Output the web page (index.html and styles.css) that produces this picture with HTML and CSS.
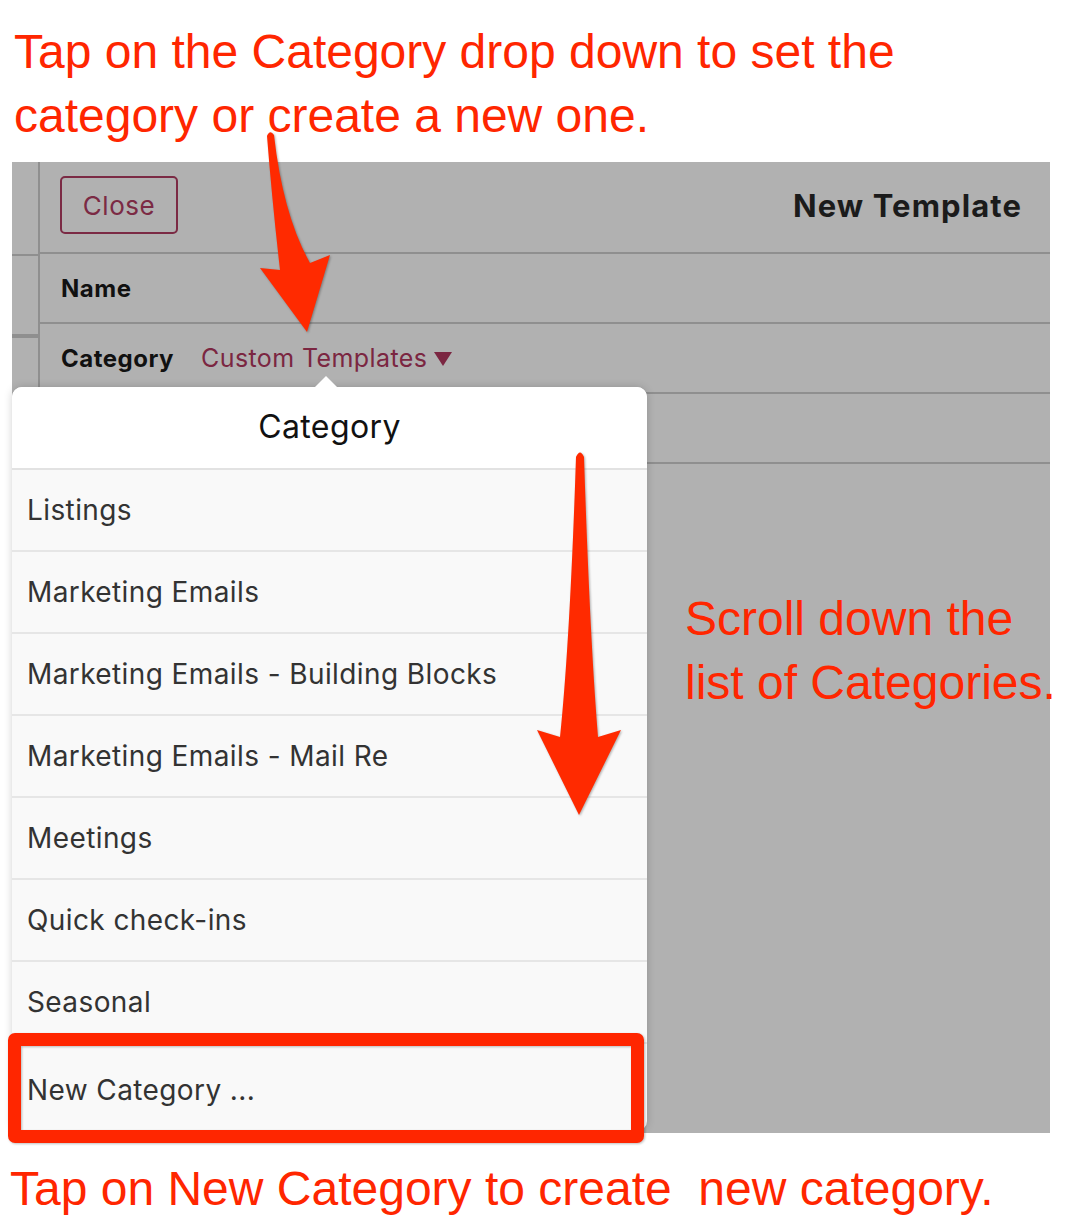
FILE: index.html
```html
<!DOCTYPE html>
<html>
<head>
<meta charset="utf-8">
<title>New Template - Category</title>
<link rel="stylesheet" href="styles.css">
</head>
<body>
<div class="page">
  <p class="note note-top">Tap on the Category drop down to set the<br>category or create a new one.</p>
  <div class="panel">
    <div class="strip">
      <div class="strip-cell s1"></div>
      <div class="strip-cell s2"></div>
      <div class="strip-cell s3"></div>
    </div>
    <div class="main">
      <div class="header">
        <button class="close" type="button">Close</button>
        <h1 class="title">New Template</h1>
      </div>
      <div class="row"><span class="label">Name</span></div>
      <div class="row"><span class="label">Category</span><span class="picker">Custom Templates<span class="tri"></span></span></div>
      <div class="row"></div>
      <p class="note note-scroll">Scroll down the<br>list of Categories.</p>
    </div>
    <div class="popover">
      <div class="pop-head">Category</div>
      <ul class="pop-list">
        <li class="pop-item">Listings</li>
        <li class="pop-item">Marketing Emails</li>
        <li class="pop-item">Marketing Emails - Building Blocks</li>
        <li class="pop-item">Marketing Emails - Mail Re</li>
        <li class="pop-item">Meetings</li>
        <li class="pop-item">Quick check-ins</li>
        <li class="pop-item">Seasonal</li>
        <li class="pop-item pop-last">New Category ...</li>
      </ul>
    </div>
  </div>
  <p class="note note-bottom">Tap on New Category to create&nbsp; new category.</p>
  <div class="highlight"></div>
  <svg class="arrows" width="1076" height="1230" viewBox="0 0 1076 1230" xmlns="http://www.w3.org/2000/svg">
    <path class="arrow" d="M267,136 Q270,129 274,135 Q283,215 310,263 L330,255 L307,332 L260,268 L280,270 Q272,200 267,136 Z"/>
    <path class="arrow" d="M576,457 Q580,448 584,457 Q590,640 598,737 L621,730 L579,815 L537,730 L560,737 Q570,640 576,457 Z"/>
  </svg>
</div>
</body>
</html>
```
FILE: styles.css
```css
html, body {
  margin: 0;
  padding: 0;
  background: #ffffff;
}

.page {
  position: relative;
  width: 1076px;
  height: 1230px;
  overflow: hidden;
  font-family: "Inter", "Open Sans", sans-serif;
}

.note {
  margin: 0;
  font-family: "Liberation Sans", Arial, sans-serif;
  font-size: 48px;
  line-height: 64px;
  color: #ff2600;
  white-space: nowrap;
}

.note-top {
  padding: 20px 0 0 14px;
  margin-bottom: 14px;
}

.panel {
  position: relative;
  margin-left: 12px;
  width: 1038px;
  height: 971px;
  background: #b1b1b1;
  display: flex;
}

.strip {
  flex: 0 0 26px;
  border-right: 2px solid #8f8f8f;
  display: flex;
  flex-direction: column;
}

.s1 {
  height: 92px;
  border-bottom: 2px solid #8f8f8f;
}

.s2 {
  height: 78px;
  border-bottom: 4px solid #8f8f8f;
}

.main {
  flex: 1;
  min-width: 0;
  display: flex;
  flex-direction: column;
}

.header {
  height: 92px;
  box-sizing: border-box;
  border-bottom: 2px solid #8f8f8f;
  display: flex;
  align-items: center;
  justify-content: space-between;
  padding: 0 28px 4px 20px;
}

.close {
  width: 118px;
  height: 58px;
  border: 2px solid #7b2a44;
  border-radius: 5px;
  background: transparent;
  color: #7b2a44;
  font-family: "Inter", "Open Sans", sans-serif;
  font-size: 26px;
  letter-spacing: 0.5px;
  padding: 0;
}

.title {
  margin: 0;
  font-size: 31px;
  font-weight: 700;
  color: #1b1b1b;
  letter-spacing: 1.1px;
}

.row {
  height: 70px;
  box-sizing: border-box;
  border-bottom: 2px solid #8f8f8f;
  display: flex;
  align-items: center;
  padding-left: 21px;
}

.label {
  font-size: 24px;
  font-weight: 700;
  color: #111111;
  letter-spacing: 0.5px;
}

.picker {
  margin-left: 27px;
  font-size: 25px;
  color: #7b2641;
  letter-spacing: 0.4px;
  display: flex;
  align-items: center;
}

.tri {
  display: inline-block;
  width: 0;
  height: 0;
  margin-left: 7px;
  margin-top: 2px;
  border-left: 9px solid transparent;
  border-right: 9px solid transparent;
  border-top: 14px solid #7b2641;
}

.note-scroll {
  margin: 123px 0 0 645px;
}

.popover {
  position: absolute;
  left: 0;
  top: 225px;
  width: 635px;
  bottom: 2px;
  background: #f9f9f9;
  border-radius: 10px;
  box-shadow: 0 0 8px rgba(0, 0, 0, 0.18);
  display: flex;
  flex-direction: column;
}

.popover::before {
  content: "";
  position: absolute;
  left: 303px;
  top: -11px;
  border-left: 11px solid transparent;
  border-right: 11px solid transparent;
  border-bottom: 11px solid #ffffff;
}

.pop-head {
  height: 83px;
  box-sizing: border-box;
  background: #ffffff;
  border-radius: 10px 10px 0 0;
  border-bottom: 2px solid #e2e2e2;
  display: flex;
  align-items: center;
  justify-content: center;
  font-size: 32px;
  letter-spacing: 0.4px;
  color: #111111;
  padding-bottom: 2px;
}

.pop-list {
  list-style: none;
  margin: 0;
  padding: 0;
  flex: 1;
  display: flex;
  flex-direction: column;
}

.pop-item {
  height: 82px;
  box-sizing: border-box;
  border-bottom: 2px solid #e6e6e6;
  display: flex;
  align-items: center;
  padding-left: 15px;
  font-size: 28px;
  letter-spacing: 0.4px;
  color: #333333;
}

.pop-last {
  flex: 1;
  border-bottom: none;
  padding-top: 4px;
}

.note-bottom {
  margin-top: 24px;
  padding-left: 10px;
}

.highlight {
  position: absolute;
  left: 8px;
  top: 1033px;
  width: 636px;
  height: 110px;
  box-sizing: border-box;
  border: 13px solid #ff2600;
  border-radius: 7px;
  filter: drop-shadow(1px 1px 1px rgba(0, 0, 0, 0.25));
}

.arrows {
  position: absolute;
  left: 0;
  top: 0;
  pointer-events: none;
}

.arrow {
  fill: #ff2a00;
  filter: drop-shadow(1px 1px 1px rgba(0, 0, 0, 0.3));
}
```
